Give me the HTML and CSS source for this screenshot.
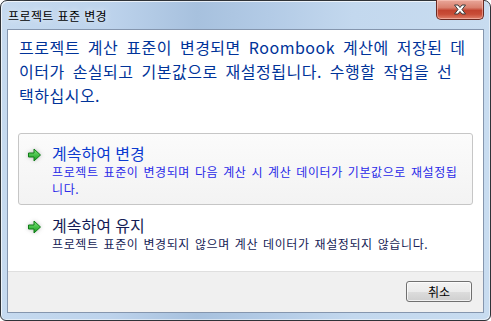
FILE: index.html
```html
<!DOCTYPE html>
<html lang="ko">
<head>
<meta charset="utf-8">
<title>프로젝트 표준 변경</title>
<link rel="stylesheet" href="styles.css">
</head>
<body>
<div class="window">
  <div class="titlebar">
    <span class="title">프로젝트 표준 변경</span>
    <div class="close">
      <svg width="16" height="11" viewBox="0 0 16 11">
        <path d="M2.5 1 H6 L8 3.5 L10 1 H13.5 L10 5.5 L13.5 10 H10 L8 7.5 L6 10 H2.5 L6 5.5 Z" fill="#fff" stroke="#3a3a3a" stroke-width="1" stroke-linejoin="round"/>
      </svg>
    </div>
  </div>
  <div class="client">
    <div class="content">
      <p class="main">프로젝트 계산 표준이 변경되면 Roombook 계산에 저장된 데이터가 손실되고 기본값으로 재설정됩니다. 수행할 작업을 선택하십시오.</p>
      <div class="links">
        <div class="cmd cmd-hover">
          <svg class="arrow" width="16" height="16" viewBox="0 0 16 16">
            <defs>
              <linearGradient id="g1" x1="0" y1="0" x2="0" y2="1">
                <stop offset="0" stop-color="#7ee87a"/>
                <stop offset="1" stop-color="#139a1c"/>
              </linearGradient>
            </defs>
            <path d="M1.5 6 H7 V2 L13.5 8 L7 14 V10 H1.5 Z" fill="url(#g1)" stroke="#0f7a16" stroke-width="1" stroke-linejoin="round"/>
          </svg>
          <div class="cmd-text">
            <div class="cmd-title">계속하여 변경</div>
            <div class="cmd-desc">프로젝트 표준이 변경되며 다음 계산 시 계산 데이터가 기본값으로 재설정됩니다.</div>
          </div>
        </div>
        <div class="cmd">
          <svg class="arrow" width="16" height="16" viewBox="0 0 16 16">
            <defs>
              <linearGradient id="g2" x1="0" y1="0" x2="0" y2="1">
                <stop offset="0" stop-color="#7ee87a"/>
                <stop offset="1" stop-color="#139a1c"/>
              </linearGradient>
            </defs>
            <path d="M1.5 6 H7 V2 L13.5 8 L7 14 V10 H1.5 Z" fill="url(#g2)" stroke="#0f7a16" stroke-width="1" stroke-linejoin="round"/>
          </svg>
          <div class="cmd-text">
            <div class="cmd-title">계속하여 유지</div>
            <div class="cmd-desc">프로젝트 표준이 변경되지 않으며 계산 데이터가 재설정되지 않습니다.</div>
          </div>
        </div>
      </div>
    </div>
    <div class="footer">
      <button class="btn">취소</button>
    </div>
  </div>
</div>
</body>
</html>
```
FILE: styles.css
```css
* { box-sizing: border-box; }
html, body { margin: 0; padding: 0; background: #ffffff; }
body { font-family: "Noto Sans CJK KR", "Noto Sans", sans-serif; }

.window {
  width: 491px;
  height: 321px;
  border: 1px solid #2f3338;
  border-radius: 7px 7px 6px 6px;
  padding: 0 6px 7px 6px;
  display: flex;
  flex-direction: column;
  background:
    linear-gradient(90deg, #c6daef 0%, #bdd3ec 22%, #a7c1de 40%, #b3cbe6 55%, #c3d8ee 72%, #c8dcf0 100%);
  box-shadow: inset 1px 1px 0 rgba(255,255,255,0.7), inset -1px -1px 0 rgba(255,255,255,0.5);
}

.titlebar {
  height: 28px;
  display: flex;
  justify-content: space-between;
  align-items: flex-start;
}
.title {
  font-size: 12px;
  line-height: 16px;
  padding-top: 7px;
  padding-left: 1px;
  letter-spacing: 0.4px;
  color: #000;
  text-shadow: 0 0 6px rgba(255,255,255,0.9);
}
.close {
  width: 48px;
  height: 20px;
  margin-top: -1px;
  border: 1px solid #6b2a22;
  border-top: none;
  border-radius: 0 0 5px 5px;
  background: linear-gradient(180deg, #e9a79a 0%, #d9806e 40%, #c2432f 55%, #c84d37 75%, #e0806a 100%);
  box-shadow: inset 0 0 0 1px rgba(255,210,200,0.5);
  display: flex;
  align-items: center;
  justify-content: center;
}
.close svg { display: block; }

.client {
  flex: 1;
  border: 1px solid #8596ae;
  background: #ffffff;
  display: flex;
  flex-direction: column;
}
.content {
  flex: 1;
  background: #ffffff;
}
.main {
  margin: 0;
  padding: 5px 16px 0 11px;
  font-size: 16px;
  line-height: 24px;
  letter-spacing: 0.5px;
  word-spacing: 3px;
  color: #003399;
}

.links {
  margin: 26px 10px 0 10px;
  display: flex;
  flex-direction: column;
}
.cmd {
  display: flex;
  align-items: flex-start;
  border: 1px solid transparent;
  border-radius: 3px;
  padding: 10px 8px 7px 8px;
}
.cmd-hover {
  border-color: #c6c6c6;
  background: linear-gradient(180deg, #fbfbfb 0%, #f3f3f3 100%);
}
.arrow {
  flex: none;
  margin-top: 3px;
  margin-right: 9px;
  filter: drop-shadow(0 0 2px rgba(0,0,0,0.25));
}
.cmd-text { flex: 1; }
.cmd-title {
  font-size: 16px;
  line-height: 19px;
  color: #151c55;
}
.cmd-desc {
  font-size: 12px;
  line-height: 17px;
  letter-spacing: 0.6px;
  word-spacing: 1px;
  color: #151c55;
  padding-right: 4px;
}
.cmd-hover .cmd-title { color: #0b3bd0; }
.cmd-hover .cmd-desc { color: #2a2ae8; }

.footer {
  height: 41px;
  flex: none;
  background: #f0f0f0;
  border-top: 1px solid #dfdfdf;
  display: flex;
  justify-content: flex-end;
  align-items: flex-start;
  padding: 9px 11px 0 0;
}
.btn {
  width: 66px;
  height: 21px;
  border: 1px solid #707070;
  border-radius: 3px;
  background: linear-gradient(180deg, #f2f2f2 0%, #ebebeb 50%, #dddddd 51%, #cfcfcf 100%);
  box-shadow: inset 0 0 0 1px rgba(255,255,255,0.7);
  font-family: "Noto Sans CJK KR", sans-serif;
  font-size: 12px;
  line-height: 17px;
  color: #000;
  padding: 0;
}
```
